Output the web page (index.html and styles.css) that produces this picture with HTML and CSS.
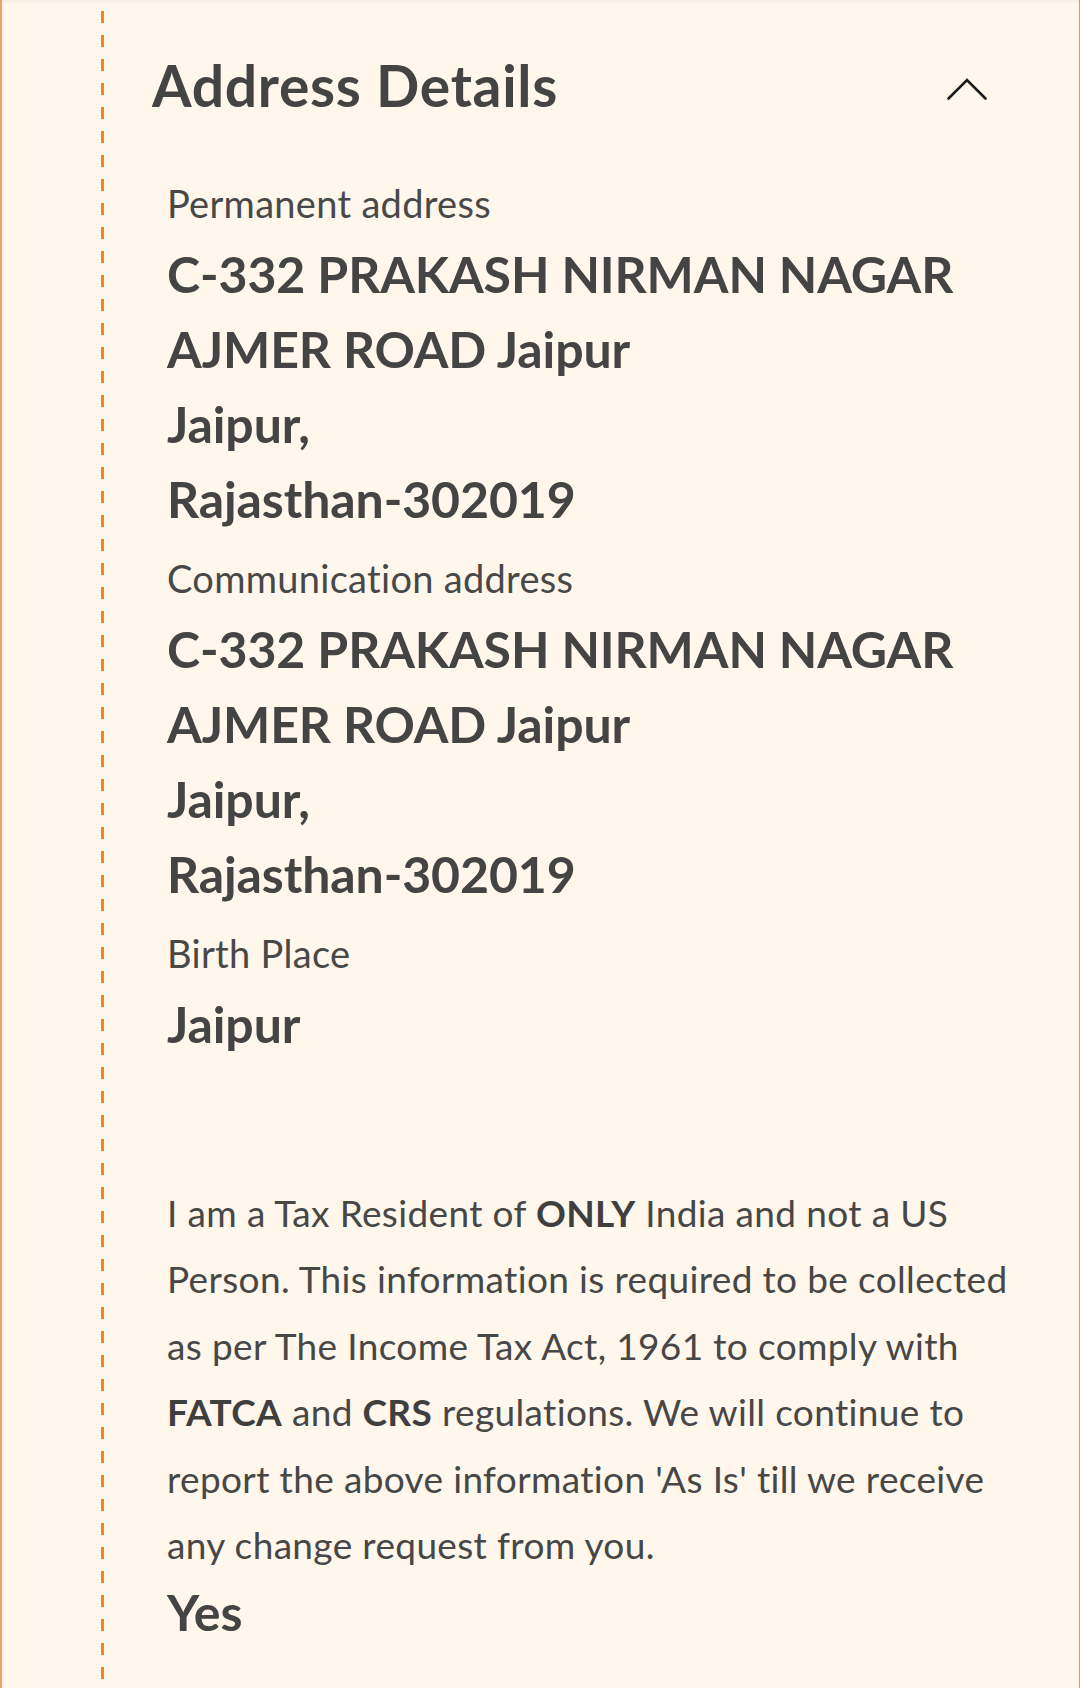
FILE: index.html
```html
<!DOCTYPE html>
<html lang="en">
<head>
<meta charset="utf-8">
<title>Address Details</title>
<link rel="stylesheet" href="styles.css">
</head>
<body>
<div class="card">
  <div class="rail-space"></div>
  <div class="rail"></div>
  <div class="content">
    <div class="header">
      <h2 class="title">Address Details</h2>
      <svg class="chevron" width="40" height="22" viewBox="0 0 40 22" aria-hidden="true">
        <polyline points="1.5,20.5 20,2 38.5,20.5" fill="none" stroke="#1a1a1a" stroke-width="2.6" stroke-linecap="round" stroke-linejoin="miter"/>
      </svg>
    </div>
    <div class="details">
      <div class="field">
        <div class="label">Permanent address</div>
        <div class="value">C-332 PRAKASH NIRMAN NAGAR AJMER ROAD Jaipur<br>Jaipur,<br>Rajasthan-302019</div>
      </div>
      <div class="field">
        <div class="label">Communication address</div>
        <div class="value">C-332 PRAKASH NIRMAN NAGAR AJMER ROAD Jaipur<br>Jaipur,<br>Rajasthan-302019</div>
      </div>
      <div class="field">
        <div class="label">Birth Place</div>
        <div class="value">Jaipur</div>
      </div>
      <p class="declaration">I am a Tax Resident of <b>ONLY</b> India and not a US Person. This information is required to be collected as per The Income Tax Act, 1961 to comply with <b>FATCA</b> and <b>CRS</b> regulations. We will continue to report the above information 'As Is' till we receive any change request from you.</p>
      <div class="answer">Yes</div>
    </div>
  </div>
</div>
</body>
</html>
```

FILE: styles.css
```css
html, body {
  margin: 0;
  padding: 0;
  background: #fff6ec;
}

body {
  font-family: Lato, "Noto Sans", sans-serif;
  color: #454545;
}

.card {
  width: 1080px;
  height: 1688px;
  box-sizing: border-box;
  display: grid;
  grid-template-columns: 99px 3px 1fr;
  background: #fff6ec;
  border-left: 2px solid #eba462;
  border-right: 1px solid #dc9c5e;
  box-shadow: inset 0 3px 3px -1px rgba(120, 80, 40, 0.06);
  overflow: hidden;
}

.rail {
  background-image: linear-gradient(to bottom, #f2851c 0, #f2851c 12px, transparent 12px);
  background-size: 3px 24px;
  background-position: 0 11px;
  background-repeat: repeat-y;
}

.content {
  padding: 45px 60px 0 48px;
}

.header {
  display: flex;
  align-items: center;
  justify-content: space-between;
  padding-right: 32px;
}

.title {
  margin: 0;
  font-size: 57px;
  line-height: 80px;
  font-weight: 700;
  color: #444444;
  letter-spacing: 0.7px;
}

.chevron {
  display: block;
  margin-top: 8px;
}

.details {
  padding-left: 15px;
  margin-top: 54px;
}

.field + .field {
  margin-top: 17px;
}

.label {
  font-size: 38px;
  line-height: 48px;
  font-weight: 400;
  color: #484848;
  letter-spacing: 0.3px;
}

.value {
  margin-top: 10px;
  font-size: 50px;
  line-height: 75px;
  font-weight: 700;
  color: #444444;
  letter-spacing: -0.1px;
}

.declaration {
  margin: 118px 0 0 0;
  font-size: 37px;
  line-height: 66.4px;
  font-weight: 400;
  color: #474747;
  letter-spacing: 0.35px;
}

.declaration b {
  font-weight: 700;
  color: #3f3f3f;
}

.answer {
  margin-top: -3px;
  font-size: 50px;
  line-height: 75px;
  font-weight: 700;
  color: #444444;
}
```
